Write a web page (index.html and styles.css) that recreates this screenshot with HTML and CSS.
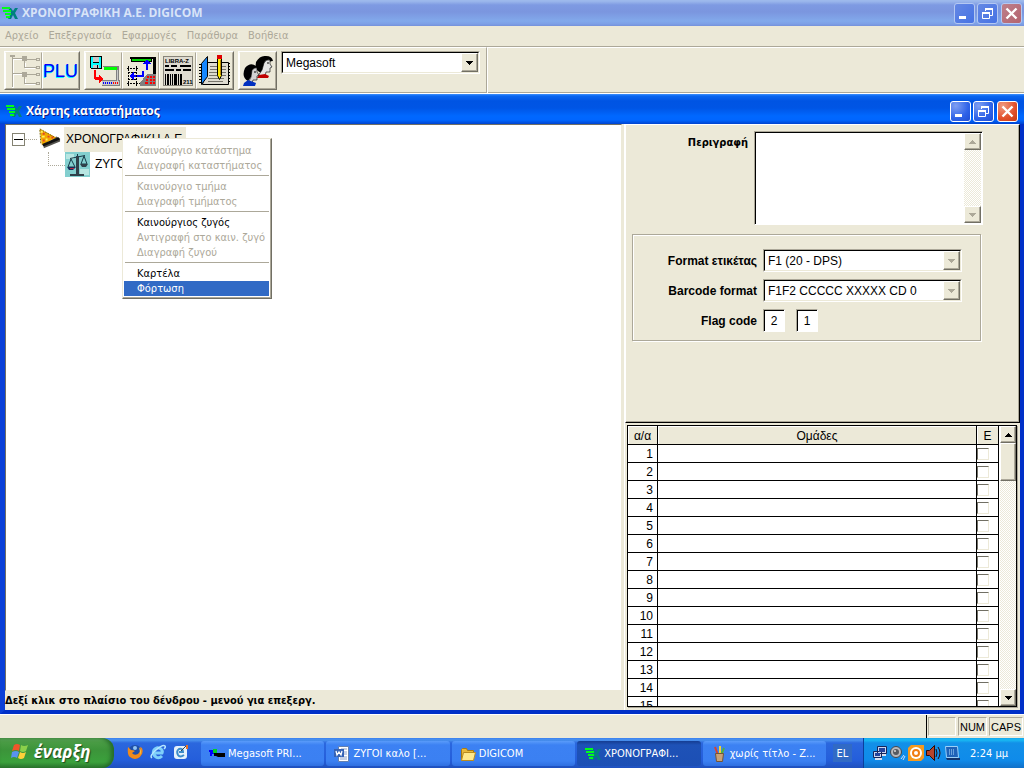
FILE: index.html
```html
<!DOCTYPE html>
<html lang="el">
<head>
<meta charset="utf-8">
<title>ΧΡΟΝΟΓΡΑΦΙΚΗ Α.Ε. DIGICOM</title>
<link rel="stylesheet" href="styles.css">
</head>
<body>
<svg class="defs" aria-hidden="true">
  <symbol id="logo" viewBox="0 0 16 14">
    <path fill="#008080" d="M6 2h3l2 3 2-3h3l-3 5 3 6h-3l-2-4-2 4H6l3-6z"/>
    <path fill="#00ff18" d="M0 1h8v2H0zM1 4h8v2H1zM3 7h6v2H3zM4 10h4v2H4z"/>
  </symbol>
  <symbol id="min" viewBox="0 0 21 21"><path fill="#fff" d="M5 13h7v3H5z"/></symbol>
  <symbol id="restore" viewBox="0 0 21 21"><path fill="none" stroke="#fff" d="M8.500 8V5.500h7v7H13M5.500 9.500h7v6h-7z"/><path fill="#fff" d="M8 5h8v2H8zM5 9h8v2H5z"/></symbol>
  <symbol id="close" viewBox="0 0 21 21"><path stroke="#fff" stroke-width="2.400" d="M5.500 5.500l10 10M15.500 5.500l-10 10"/></symbol>
  <symbol id="down" viewBox="0 0 7 4"><path fill="currentColor" d="M0 0h7v1H6v1H5v1H4v1H3V3H2V2H1V1H0z"/></symbol>
  <symbol id="up" viewBox="0 0 7 4"><path fill="currentColor" d="M0 4h7V3H6V2H5V1H4V0H3v1H2v1H1v1H0z"/></symbol>
</svg>

<header class="titlebar app-title">
  <svg class="title-icon"><use href="#logo"/></svg>
  <h1>ΧΡΟΝΟΓΡΑΦΙΚΗ Α.Ε. DIGICOM</h1>
  <button class="win-btn" aria-label="Minimize"><svg><use href="#min"/></svg></button>
  <button class="win-btn" aria-label="Restore"><svg><use href="#restore"/></svg></button>
  <button class="win-btn close" aria-label="Close"><svg><use href="#close"/></svg></button>
</header>

<nav class="menubar">
  <button disabled>Αρχείο</button>
  <button disabled>Επεξεργασία</button>
  <button disabled>Εφαρμογές</button>
  <button disabled>Παράθυρα</button>
  <button disabled>Βοήθεια</button>
</nav>

<div class="toolbar">
  <div class="tools">
    <div class="tool-group">
      <button class="tool" aria-label="Tree" disabled>
        <svg viewBox="0 0 32 34" shape-rendering="crispEdges"><path fill="#fff" d="M4 5h2v29H4zM5 5h10v1H5zM5 20h10v1H5zM17 9h1v5h9v1H17zM17 25h1v5h9v1H17z"/><path fill="#aca899" d="M2 1h5v2H2zM4 3h1v30H4zM5 4h9v1H5zM14 2h5v5h-5zM5 19h9v1H5zM14 18h5v5h-5zM19 5h9v1h-9zM16 7h1v6h11v1H16zM19 20h9v1h-9zM16 23h1v6h11v1H16z"/><path fill="none" stroke="#aca899" d="M28.500 4.500h3v2h-3zM28.500 12.500h3v2h-3zM28.500 19.500h3v2h-3zM28.500 28.500h3v2h-3z"/></svg>
      </button>
      <button class="tool plu">PLU</button>
    </div>
    <div class="tool-group">
      <button class="tool" aria-label="Save to scale">
        <svg viewBox="0 0 32 34" shape-rendering="crispEdges"><path d="M2 2h12v13H3V14H2z"/><path fill="#0ff" d="M3 3h2v6h6V3h2v11H3z"/><path fill="#c8c8c8" d="M5 3h6v5H5zM5 11h6v3H5z"/><path d="M9 11h1v3H9z"/><path fill="red" d="M6 16h2v7h3v-3l4 5-4 4v-3H7v-1H6z"/><path fill="#808080" d="M15 12h16v1H15zM28 13h3v14h-3zM14 26h18v6H14z"/><path fill="#0f0" d="M16 13h13v3H16z"/><path fill="#c8c8c8" d="M29 16h1v11h-1zM14 27h17v4H14z"/><path stroke="#00f" stroke-width="2" stroke-dasharray="1" d="M15 29h10"/><path stroke="red" stroke-width="2" stroke-dasharray="1" d="M25 29h5"/></svg>
      </button>
      <button class="tool" aria-label="Send to scale">
        <svg viewBox="0 0 32 34" shape-rendering="crispEdges"><path d="M5 3h26v21h-3V5H5z"/><path fill="#00d800" stroke="#000" d="M6.500 4.500h20v3h-20z"/><path fill="#00f" d="M22 5l4 5h-3v6h-2v-6h-3zM4 22l5-4v3h8v-4h2v6H9v3z"/><path stroke="#000" stroke-dasharray="2 1" d="M3.500 12v20M11.500 12v20M2 14.500h12M2 29.500h15M3 18.500h8M3 25.500h8"/><path fill="#808080" d="M22 20h9v12H15v-3z"/><path fill="red" d="M22 22h2v2h-2zM25 22h2v2h-2zM28 22h2v2h-2zM21 25h2v2h-2zM25 25h2v2h-2zM28 25h2v2h-2zM20 28h3v2h-3zM25 28h2v2h-2zM28 28h2v2h-2z"/></svg>
      </button>
      <button class="tool" aria-label="Barcode LIBRA-Z">
        <svg viewBox="0 0 32 34" shape-rendering="crispEdges"><path fill="#dedbd0" stroke="#88857a" d="M1.500 2.500h29v29h-29z"/><path d="M3 11h4v2H3zM9 11h6v2H9zM18 11h11v2H18zM3 15h9v2H3zM14 15h5v2h-5zM21 15h8v2h-8zM3 20h1v11H3zM5 20h2v11H5zM8 20h1v11H8zM10 20h1v11h-1zM12 20h3v11h-3zM16 20h1v11h-1zM18 20h2v11h-2z"/><text class="tiny-label" x="3" y="9">LIBRA-Z</text><text class="tiny-label" x="21" y="30">211</text></svg>
      </button>
      <button class="tool" aria-label="Notebook">
        <svg viewBox="0 0 32 34"><path fill="#dedbd0" stroke="#000" d="M8.500 8.500h21v22H3.500z"/><path fill="#1687ff" stroke="#000" d="M2.500 9.500l6-7v20l-6 8z"/><path stroke="#77746a" d="M11 12.500h16M11 15.500h16M10 18.500h17M10 21.500h17M9 24.500h16M9 27.500h15"/><path stroke="#000" stroke-width="2" stroke-dasharray="1 2" d="M1 10v21M30 9v21"/><path fill="#ffe800" stroke="#000" d="M18.500 4.500h4v17l-2 4-2-4z"/><path fill="#e00000" d="M18 1h5v4h-5z"/><path stroke="#b88a00" d="M21.500 6v15"/></svg>
      </button>
    </div>
    <div class="tool-group">
      <button class="tool" aria-label="Users">
        <svg viewBox="0 0 32 34"><path d="M14 8q4-7 10-6 6 0 7 5-4 0-7 4-1 6-5 8-7-3-5-11z"/><path fill="#e4e4e4" stroke="#000" stroke-width=".6" d="M22 9q2-4 6-3v4l2 3-2 1v4h-4l-1 4h-7l4-6z"/><path fill="#c00000" d="M17 21l6-1 4 2-1 2H15z"/><path d="M3 14q6-7 12-1-1 3-4 4l-2 6-3 4q-7-4-3-13z"/><path fill="#d2d2d2" stroke="#000" stroke-width=".6" d="M10 16q3-3 5-2v4l2 3-2 1v4h-4l-1 3H6l3-6z"/><path fill="#0030c0" d="M2 29l4-3 8 3-1 3H1z"/><path stroke="#000" d="M25 9h2M12 18h2"/></svg>
      </button>
    </div>
    <div class="combo db-combo">
      <select aria-label="Database"><option>Megasoft</option></select>
      <span class="arrow"><svg><use href="#down"/></svg></span>
    </div>
  </div>
</div>

<main class="child">
  <header class="titlebar child-title">
    <svg class="title-icon"><use href="#logo"/></svg>
    <h2>Χάρτης καταστήματος</h2>
    <button class="win-btn" aria-label="Minimize"><svg><use href="#min"/></svg></button>
    <button class="win-btn" aria-label="Restore"><svg><use href="#restore"/></svg></button>
    <button class="win-btn close" aria-label="Close"><svg><use href="#close"/></svg></button>
  </header>
  <div class="panes">
    <section class="left">
      <div class="tree">
        <div class="node">
          <button class="toggle" aria-label="Collapse"></button><span class="dots"></span>
          <svg class="node-icon" viewBox="0 0 26 24"><path fill="#55534e" d="M7 21L24 14v-3l-4-2-13 9z"/><path fill="#f2a900" d="M3 1l17 9-15 8z"/><path fill="none" stroke="#7a6500" stroke-dasharray="2 1" d="M3 2l1 15M3 1l16 9"/><path fill="#e0442a" d="M6 5h2v2H6zM11 8h2v2h-2zM6 12h2v2H6zM15 9h2v2h-2z"/><path fill="#fff15a" d="M5 8h3v2H5zM9 11h2v2H9zM4 3h2v2H4z"/><path stroke="#111" stroke-width="3" d="M6 18l17-7"/></svg>
          <span class="node-label selected">ΧΡΟΝΟΓΡΑΦΙΚΗ Α.Ε</span>
        </div>
        <div class="node sub">
          <span class="elbow"></span>
          <svg class="node-icon" viewBox="0 0 25 25"><path fill="#83cfcf" d="M0 0h25v25H0z"/><path fill="#b7e6e2" d="M1 2h8v5H1zM15 17h9v6h-9z"/><path fill="none" stroke="#173a48" d="M12.500 2v20M5 6.500l15-3M6 7l-3 8h7zM19 4l-3 8h6z"/><path fill="#182c58" d="M2 15h9l-3 3H4z"/><path fill="#30404a" d="M15 12h8l-2 3h-4zM11 4h3v18h-3zM5 22h14v2H5z"/><path fill="#b62c42" d="M5 16h4v1H5z"/></svg>
          <span class="node-label">ΖΥΓΟ</span>
        </div>
        <div class="context-menu" role="menu">
          <button role="menuitem" disabled>Καινούργιο κατάστημα</button>
          <button role="menuitem" disabled>Διαγραφή καταστήματος</button>
          <hr>
          <button role="menuitem" disabled>Καινούργιο τμήμα</button>
          <button role="menuitem" disabled>Διαγραφή τμήματος</button>
          <hr>
          <button role="menuitem">Καινούργιος ζυγός</button>
          <button role="menuitem" disabled>Αντιγραφή στο καιν. ζυγό</button>
          <button role="menuitem" disabled>Διαγραφή ζυγού</button>
          <hr>
          <button role="menuitem">Καρτέλα</button>
          <button role="menuitem" class="active">Φόρτωση</button>
        </div>
      </div>
      <p class="hint">Δεξί κλικ στο πλαίσιο του δένδρου - μενού για επεξεργ.</p>
    </section>
    <section class="right">
      <form class="details">
        <div class="desc-row">
          <label for="desc">Περιγραφή</label>
          <div class="desc-box">
            <textarea id="desc"></textarea>
            <div class="scroll idle"><span class="scroll-btn"><svg><use href="#up"/></svg></span><span class="scroll-btn"><svg><use href="#down"/></svg></span></div>
          </div>
        </div>
        <div class="group">
          <label for="fmt">Format ετικέτας</label>
          <div class="combo idle"><select id="fmt"><option>F1 (20 - DPS)</option></select><span class="arrow"><svg><use href="#down"/></svg></span></div>
          <label for="bar">Barcode format</label>
          <div class="combo idle"><select id="bar"><option>F1F2 CCCCC XXXXX CD 0</option></select><span class="arrow"><svg><use href="#down"/></svg></span></div>
          <label for="flag1">Flag code</label>
          <div class="flags"><input id="flag1" value="2"><input aria-label="Flag code 2" value="1"></div>
        </div>
      </form>
      <div class="grid-panel">
        <div class="grid-clip">
          <table>
            <colgroup><col class="c-num"><col><col class="c-chk"></colgroup>
            <thead><tr><th>α/α</th><th>Ομάδες</th><th>Ε</th></tr></thead>
            <tbody>
              <tr><td>1</td><td></td><td><input type="checkbox" aria-label="Ε 1"></td></tr>
              <tr><td>2</td><td></td><td><input type="checkbox" aria-label="Ε 2"></td></tr>
              <tr><td>3</td><td></td><td><input type="checkbox" aria-label="Ε 3"></td></tr>
              <tr><td>4</td><td></td><td><input type="checkbox" aria-label="Ε 4"></td></tr>
              <tr><td>5</td><td></td><td><input type="checkbox" aria-label="Ε 5"></td></tr>
              <tr><td>6</td><td></td><td><input type="checkbox" aria-label="Ε 6"></td></tr>
              <tr><td>7</td><td></td><td><input type="checkbox" aria-label="Ε 7"></td></tr>
              <tr><td>8</td><td></td><td><input type="checkbox" aria-label="Ε 8"></td></tr>
              <tr><td>9</td><td></td><td><input type="checkbox" aria-label="Ε 9"></td></tr>
              <tr><td>10</td><td></td><td><input type="checkbox" aria-label="Ε 10"></td></tr>
              <tr><td>11</td><td></td><td><input type="checkbox" aria-label="Ε 11"></td></tr>
              <tr><td>12</td><td></td><td><input type="checkbox" aria-label="Ε 12"></td></tr>
              <tr><td>13</td><td></td><td><input type="checkbox" aria-label="Ε 13"></td></tr>
              <tr><td>14</td><td></td><td><input type="checkbox" aria-label="Ε 14"></td></tr>
              <tr><td>15</td><td></td><td><input type="checkbox" aria-label="Ε 15"></td></tr>
            </tbody>
          </table>
        </div>
        <div class="scroll"><span class="scroll-btn"><svg><use href="#up"/></svg></span><span class="thumb"></span><span class="scroll-btn"><svg><use href="#down"/></svg></span></div>
      </div>
    </section>
  </div>
</main>

<footer class="statusbar">
  <div class="indicators"><span></span><span>NUM</span><span>CAPS</span></div>
</footer>

<div class="taskbar">
  <button class="start">
    <svg viewBox="0 0 18 17"><path fill="#f0562a" d="M3 2q3-2 6 0L8 8Q5 6 1 8z"/><path fill="#8bd04b" d="M10 2q3 2 7 0l-2 6q-3 2-6 0z"/><path fill="#5a92f0" d="M1 9q4-2 7 0l-2 6q-3-2-6 0z"/><path fill="#ffd03a" d="M9 9q3 2 6 0l-2 6q-3 2-6 0z"/></svg>
    έναρξη
  </button>
  <div class="quick">
    <button aria-label="Firefox"><svg viewBox="0 0 16 16"><circle cx="8" cy="8" r="7" fill="#1f4fa8"/><path fill="#f08a1c" d="M1 3q-1 8 2 10 5 4 10 0 4-4 2-9l-2-1q1 5-2 7-4 2-6-1l3-2q-2-1-4-1z"/><path fill="#ffd24a" d="M12 3q3 4 1 8 0-5-1-8z"/><circle cx="8" cy="4" r="2" fill="#8fc3f4"/></svg></button>
    <button aria-label="Internet Explorer"><svg viewBox="0 0 16 16"><path fill="none" stroke="#7fd0fa" stroke-width="3" d="M12 12q-3 3-6 1-4-3-2-7 3-4 7-1 2 2 1 4H5"/><path fill="none" stroke="#b5e6ff" stroke-width="1.500" d="M2 14q-3-2 4-8 7-6 9-4 1 1-1 3"/></svg></button>
    <button aria-label="Show desktop"><svg viewBox="0 0 16 16"><rect x="1" y="2" width="13" height="13" rx="3" fill="#e6f1fb"/><path fill="none" stroke="#3d8cc9" stroke-width="2" d="M11 11q-4 3-6 0-2-4 1-6 4-1 4 3H6"/><path fill="#e8742a" d="M13 1h2v4h-2z"/><path stroke="#345" d="M8 7l5-5"/></svg></button>
  </div>
  <div class="tasks">
    <button class="task"><svg viewBox="0 0 16 16"><path fill="#00f" d="M0 4h6v4H3v2H1V6H0z"/><path fill="#00d020" d="M4 3h4v4H4z"/><path d="M5 7h11v4H9l-2-1H5z"/></svg><span>Megasoft PRI...</span></button>
    <button class="task"><svg viewBox="0 0 16 16"><path fill="#fff" stroke="#6480b0" d="M4.500.500h10v15h-10z"/><path stroke="#8ca0c8" d="M7 3h6M9 6h4M9 8h4M6 11h7M6 13h7"/><path fill="#3562b5" d="M0 3h10v8H0z"/><path fill="none" stroke="#fff" stroke-width="1.300" d="M2 5l1 4 2-3 2 3 1-4"/></svg><span>ΖΥΓΟΙ καλο [...</span></button>
    <button class="task"><svg viewBox="0 0 16 16"><path fill="#e8b83a" stroke="#a87a14" d="M1.500 3.500l1-1h4l1 2h6v10h-12z"/><path fill="#ffe88a" stroke="#b98b20" d="M3.500 6.500h12l-2 8h-12z"/></svg><span>DIGICOM</span></button>
    <button class="task current"><svg viewBox="0 0 16 16"><use href="#logo" y="1" width="16" height="14"/></svg><span>ΧΡΟΝΟΓΡΑΦΙ...</span></button>
    <button class="task"><svg viewBox="0 0 16 16"><path stroke="#e0402a" stroke-width="2" d="M4 1l3 8"/><path stroke="#f4d23a" stroke-width="2" d="M9 0v9"/><path stroke="#4fb040" stroke-width="2" d="M13 2l-3 7"/><path fill="#c7a27a" stroke="#725437" d="M4.500 7.500h8l-1 8h-6z"/></svg><span>χωρίς τίτλο - Ζ...</span></button>
  </div>
  <button class="lang">EL</button>
  <div class="tray">
    <svg viewBox="0 0 16 16"><path fill="#c9d5ee" stroke="#14245c" d="M5.500 1.500h9v7h-9zM1.500 6.500h8v6h-8z"/><path fill="#24439c" d="M7 3h6v4H7zM3 8h5v3H3z"/><path fill="#d8dff0" d="M3 13h7v2H3zM10 9h4v2h-4z"/></svg>
    <svg viewBox="0 0 16 16"><circle cx="6" cy="7" r="5.500" fill="#b7b9bd" stroke="#45484e"/><circle cx="6" cy="7" r="3" fill="#555a62"/><circle cx="5" cy="6" r="1" fill="#ddd"/><path fill="none" stroke="#cfe0ff" d="M11 14l3-4M13 15l2-4"/></svg>
    <svg viewBox="0 0 16 16"><path fill="#f59a20" d="M3 0h13v13l-3 3H0V3z"/><circle cx="8" cy="8" r="6" fill="#fff"/><circle cx="8" cy="8" r="3" fill="none" stroke="#f07c10" stroke-width="2"/></svg>
    <svg viewBox="0 0 16 16"><path fill="#b5442c" stroke="#2c0b06" d="M.500 5.500h3l5-5v15l-5-5h-3z"/><path fill="none" stroke="#2c0b06" d="M10 4q2 4 0 8M12 2q4 6 0 12"/></svg>
    <svg viewBox="0 0 16 16"><path fill="#1f62b8" stroke="#9cd0f8" d="M1.500 1.500h12l1 11h-12z"/><path stroke="#b6e0ff" stroke-dasharray="1 1" d="M5 5h6M5 7h6M5 9h6"/><path fill="#12346c" d="M2 13h14v2H3z"/></svg>
    <time>2:24 μμ</time>
  </div>
</div>
</body>
</html>
```

FILE: styles.css
```css
* { box-sizing: border-box; }

:root {
  --face: #ece9d8;
  --shadow: #aca899;
  --dark: #716f64;
  --ui: "DejaVu Sans Condensed", "Open Sans", sans-serif;
  --grid: "Liberation Sans", sans-serif;
}

body {
  margin: 0;
  height: 100vh;
  display: flex;
  flex-direction: column;
  overflow: hidden;
  background: var(--face);
  color: #000;
  font: 11px/15px var(--ui);
}

button, select, input, textarea { font: inherit; color: inherit; border-radius: 0; }
button { padding: 0; border: 0; background: none; }
svg { display: block; flex: none; }
.defs { display: none; }

/* title bars */
.titlebar { display: flex; align-items: center; gap: 2px; flex: none; }
.titlebar h1, .titlebar h2 {
  flex: 1;
  margin: 0;
  font: bold 12px/18px "Open Sans", "Noto Sans", sans-serif;
}
.title-icon { width: 16px; height: 14px; margin-right: 2px; }
.app-title {
  height: 26px;
  padding: 0 2px;
  color: #d8e4f8;
  background: linear-gradient(#9db9ec, #9db9ec 1px, #7e9ae2 5px, #7b96df 12px, #82a9eb 21px, #7d9fe6 24px, #7591da);
}
.win-btn {
  width: 21px;
  height: 21px;
  border: 1px solid #fff;
  border-radius: 3px;
  background: radial-gradient(circle at 25% 20%, #7f9ff2, #2f63e8 60%, #1f4ed4);
}
.win-btn.close { margin-left: 1px; }
.win-btn svg { width: 21px; height: 21px; margin: -1px; }
.win-btn.close { background: radial-gradient(circle at 25% 20%, #f09a80, #e2502b 60%, #c53a12); }
.app-title .win-btn { border-color: #b4c8f2; background: linear-gradient(135deg, #6488e4, #4672e4); }
.app-title .win-btn.close { background: linear-gradient(135deg, #bd7f8c, #b4646e); }

/* menu bar */
.menubar { display: flex; gap: 10px; height: 20px; padding: 0 5px 2px; flex: none; }
.menubar button { color: var(--shadow); }

/* toolbar */
.toolbar {
  display: flex;
  height: 48px;
  flex: none;
  border-top: 1px solid var(--shadow);
  border-bottom: 1px solid #fff;
}
.tools {
  display: flex;
  gap: 4px;
  padding: 3px 6px 0 4px;
  border-top: 1px solid #fff;
  border-right: 1px solid var(--shadow);
  border-bottom: 1px solid var(--shadow);
}
.toolbar::after { content: ""; flex: 1; border: solid #fff; border-width: 1px 0 0 1px; box-shadow: inset 0 -1px var(--shadow); }
.tool-group { display: flex; height: 39px; border: 1px solid; border-color: #fff var(--dark) var(--dark) #fff; }
.tool {
  width: 37px;
  display: grid;
  place-items: center;
  border: 1px solid;
  border-color: var(--face) var(--shadow) var(--shadow) #fff;
}
.tool svg { width: 32px; height: 34px; }
.plu { color: #00f; font: 18px/34px var(--grid); text-shadow: -1px 1px #0ff; }
.tiny-label { font: bold 6px "Liberation Sans", sans-serif; }

/* combos */
.combo {
  position: relative;
  height: 23px;
  border: 1px solid;
  border-color: var(--shadow) #fff #fff var(--shadow);
}
.combo select {
  appearance: none;
  display: block;
  width: 100%;
  height: 100%;
  padding: 0 20px 0 3px;
  border: 1px solid;
  border-color: #000 var(--face) var(--face) #000;
  background: #fff;
  font: 12px/18px var(--grid);
}
.arrow {
  position: absolute;
  top: 1px;
  right: 1px;
  bottom: 1px;
  width: 17px;
  pointer-events: none;
}
.arrow, .scroll-btn, .thumb {
  display: grid;
  place-items: center;
  background: var(--face);
  border: 1px solid;
  border-color: #fff var(--dark) var(--dark) #fff;
  box-shadow: inset -1px -1px var(--shadow);
}
.arrow svg, .scroll-btn svg { width: 7px; height: 4px; }
.idle .arrow, .idle .scroll-btn { color: var(--shadow); }
.db-combo { width: 199px; }

/* child window */
.child {
  flex: 1;
  min-height: 0;
  display: flex;
  flex-direction: column;
  border: solid #0a3fd8;
  border-width: 0 4px 4px 5px;
  border-right-color: #0030c8;
  border-bottom-color: #0030c8;
}
.child-title {
  height: 30px;
  margin: 0 -4px 0 -5px;
  padding: 4px 6px 0;
  color: #fff;
  text-shadow: 1px 1px #0a1883;
  background: linear-gradient(#3f92ff, #0a66f0 2px, #0054e3 7px, #0055e5 14px, #0068ff 22px, #0066ff 26px, #0043cf);
}
.panes { flex: 1; min-height: 0; display: grid; grid-template-columns: 620fr 395fr; background: var(--face); }
.left { display: flex; flex-direction: column; min-width: 0; padding-right: 2px; border-right: 1px solid #fff; }
.tree {
  position: relative;
  flex: 1;
  padding: 2px 0 0 6px;
  background: #fff;
  border: 1px solid;
  border-color: var(--dark) var(--face) var(--face) var(--dark);
}
.hint { margin: 0; height: 19px; line-height: 19px; font-weight: bold; }
.node { display: flex; align-items: center; height: 25px; font: 12px/15px var(--grid); }
.toggle { width: 13px; height: 13px; border: 1px solid #848272; background: linear-gradient(#000, #000) center / 9px 1px no-repeat; }
.dots { width: 12px; border-top: 1px dotted var(--shadow); }
.node-icon { width: 25px; height: 25px; }
.node-label { padding: 5px 4px 5px 5px; }
.node-label.selected { background: var(--face); margin-left: 2px; padding-left: 2px; }
.sub { padding-left: 36px; }
.elbow { width: 17px; height: 14px; border: dotted var(--shadow); border-width: 0 0 1px 1px; align-self: flex-start; }

.context-menu {
  position: absolute;
  left: 116px;
  top: 13px;
  width: 150px;
  padding: 4px 1px 2px;
  display: flex;
  flex-direction: column;
  background: #fff;
  border: 1px solid;
  border-color: var(--face) var(--dark) var(--dark) var(--face);
  box-shadow: inset -1px -1px var(--shadow);
}
.context-menu button { height: 15px; padding-left: 13px; text-align: left; line-height: 15px; white-space: nowrap; }
.context-menu button:disabled { color: var(--shadow); }
.context-menu button.active { background: #316ac5; color: #fff; margin-right: 1px; }
.context-menu hr { width: 144px; height: 1px; margin: 2px 1px 3px; border: 0; background: var(--shadow); }

/* details form */
.right { display: flex; flex-direction: column; min-width: 0; min-height: 0; }
.details {
  height: 299px;
  flex: none;
  padding: 6px 36px 0 6px;
  border: 1px solid;
  border-color: #fff #000 #000 #fff;
  box-shadow: inset -1px -1px var(--shadow);
}
label { font: bold 12px/16px var(--grid); text-align: right; }
.desc-row { display: flex; justify-content: flex-end; gap: 6px; }
.desc-row label { padding-top: 4px; font: bold 11px/16px var(--ui); }
.desc-box {
  display: flex;
  width: 229px;
  height: 94px;
  border: 1px solid;
  border-color: var(--shadow) #fff #fff var(--shadow);
  box-shadow: inset 1px 1px #000;
  padding: 1px;
  background: #fff;
}
.desc-box textarea { flex: 1; min-width: 0; border: 0; resize: none; padding: 1px; background: transparent; }
.scroll {
  width: 17px;
  display: flex;
  flex-direction: column;
  justify-content: space-between;
  background: repeating-conic-gradient(#fff 0 25%, var(--face) 0 50%) 0 0 / 2px 2px;
}
.scroll-btn { height: 17px; flex: none; }
.group {
  display: grid;
  grid-template-columns: 1fr 199px;
  gap: 7px 6px;
  align-items: center;
  margin: 9px 2px 0 0;
  padding: 14px 18px 8px 8px;
  border: 1px solid var(--shadow);
  box-shadow: 1px 1px #fff, inset 1px 1px #fff;
}
.flags { display: flex; gap: 11px; }
.flags input {
  width: 22px;
  height: 23px;
  padding: 0;
  text-align: center;
  font: 12px/16px var(--grid);
  background: #fff;
  border: 1px solid;
  border-color: var(--shadow) #fff #fff var(--shadow);
  box-shadow: inset 1px 1px #000;
}

/* groups grid */
.grid-panel {
  flex: 1;
  min-height: 0;
  display: flex;
  margin: 2px 3px 3px 2px;
  border: 1px solid #000;
  box-shadow: 1px 1px var(--shadow);
}
.grid-clip { flex: 1; min-width: 0; overflow: hidden; background: #fff; border-right: 1px solid #000; }
.grid-panel .scroll { border-left: 1px solid #fff; justify-content: flex-start; }
.grid-panel .scroll-btn:last-child { margin-top: auto; }
.thumb { height: 38px; }
table { width: 100%; table-layout: fixed; border-collapse: separate; border-spacing: 0; font: 12px/15px var(--grid); }
.c-num { width: 30px; }
.c-chk { width: 21px; }
th, td { height: 18px; padding: 1px 0 0; border: solid #000; border-width: 0 1px 1px 0; }
th { height: 19px; padding-top: 2px; background: var(--face); font-weight: normal; box-shadow: inset 1px 1px #fff; }
th:last-child, td:last-child { border-right: 0; }
td:first-child { text-align: right; padding-right: 4px; }
td:last-child { vertical-align: top; }
td input[type="checkbox"] {
  appearance: none;
  display: block;
  width: 12px;
  height: 12px;
  margin: 2px 0 0;
  border: 1px solid;
  border-color: var(--dark) var(--face) var(--face) var(--dark);
}

/* status bar */
.statusbar { display: flex; justify-content: flex-end; height: 24px; flex: none; border-top: 1px solid #fff; }
.indicators { display: flex; gap: 2px; padding: 2px 1px; border-left: 1px solid #000; font: 11px/18px var(--grid); }
.indicators span {
  min-width: 28px;
  padding: 0 1px;
  border: 1px solid;
  border-color: var(--shadow) #fff #fff var(--shadow);
}

/* taskbar */
.taskbar {
  display: flex;
  height: 30px;
  flex: none;
  color: #fff;
  background: linear-gradient(#3a80f0, #4a93ee 2px, #2b67de 5px, #245edb 22px, #1f50bd);
}
.start {
  display: flex;
  align-items: center;
  gap: 5px;
  width: 114px;
  padding: 0 0 3px 11px;
  border-radius: 0 12px 12px 0;
  background: linear-gradient(#62ad5e, #4a9c45 4px, #3c943a 12px, #3ba13c 24px, #2c7a2e);
  box-shadow: inset -3px 0 4px #256a28;
  font: italic bold 17px/24px "Open Sans", sans-serif;
  text-shadow: 1px 1px 1px #1d4a1e;
}
.start svg { width: 18px; height: 17px; }
.quick { display: flex; align-items: center; gap: 7px; padding: 0 12px 2px 13px; }
.quick svg { width: 16px; height: 16px; }
.tasks { flex: 1; min-width: 0; display: flex; gap: 2px; padding: 3px 0 2px; }
.task {
  flex: 1 1 0;
  min-width: 0;
  display: flex;
  align-items: center;
  gap: 3px;
  padding: 0 4px 0 8px;
  border-radius: 3px;
  background: linear-gradient(#5a9bfa, #3c81f3 4px, #3b80f2 20px, #2f6fe0);
}
.task svg { width: 16px; height: 16px; }
.task span { white-space: nowrap; }
.task.current { background: linear-gradient(#153d92, #1e52b7 4px, #1c4fb5); }
.lang { width: 19px; height: 18px; margin: 6px 11px 0 7px; background: #316ac5; }
.tray {
  display: flex;
  align-items: center;
  gap: 2px;
  min-width: 161px;
  padding: 0 16px 0 8px;
  border-left: 1px solid #0b3f9c;
  background: linear-gradient(#15a6ee, #19b9f3 2px, #1290e8 5px, #0f8bea 22px, #1170c8);
}
.tray svg { width: 16px; height: 16px; }
.tray time { margin-left: auto; }
```
